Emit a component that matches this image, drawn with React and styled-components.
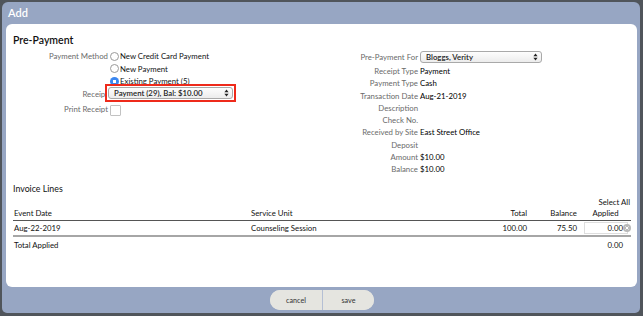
import styled, { createGlobalStyle } from "styled-components";

const GlobalStyle = createGlobalStyle`
  html, body {
    margin: 0;
    padding: 0;
    background: #50555b;
    font-family: Lato, "Open Sans", sans-serif;
    font-size: 7.8px;
  }
`;

const invoiceLines = [
  { date: "Aug-22-2019", unit: "Counseling Session", total: "100.00", balance: "75.50", applied: "0.00" },
];

const details = [
  ["Receipt Type", "Payment"],
  ["Payment Type", "Cash"],
  ["Transaction Date", "Aug-21-2019"],
  ["Description", ""],
  ["Check No.", ""],
  ["Received by Site", "East Street Office"],
  ["Deposit", ""],
  ["Amount", "$10.00"],
  ["Balance", "$10.00"],
];

function Arrows() {
  return (
    <svg width="5" height="8" viewBox="0 0 5 8">
      <path d="M2.5 0.5 L4.6 3.2 H0.4 Z" fill="#222" />
      <path d="M2.5 7.5 L4.6 4.8 H0.4 Z" fill="#222" />
    </svg>
  );
}

function Radio({ checked, label }) {
  return (
    <RadioRow>
      <RadioDot checked={checked} />
      <span>{label}</span>
    </RadioRow>
  );
}

export default function App() {
  return (
    <>
      <GlobalStyle />
      <Dialog>
        <TitleBar>Add</TitleBar>
        <Content>
          <Heading>Pre-Payment</Heading>
          <Forms>
            <LeftForm>
              <Label lh="12.5px">Payment Method</Label>
              <RadioGroup>
                <Radio label="New Credit Card Payment" />
                <Radio label="New Payment" />
                <Radio checked label="Existing Payment (5)" />
              </RadioGroup>
              <Label lh="12px">Receipt</Label>
              <Highlight>
                <FakeSelect width="125px">
                  <span>Payment (29), Bal: $10.00</span>
                  <Arrows />
                </FakeSelect>
              </Highlight>
              <Label lh="14px">Print Receipt</Label>
              <CheckCell>
                <Checkbox />
              </CheckCell>
            </LeftForm>
            <RightForm>
              <Label lh="14px" first>Pre-Payment For</Label>
              <SelectCell>
                <FakeSelect width="122px">
                  <span>Bloggs, Verity</span>
                  <Arrows />
                </FakeSelect>
              </SelectCell>
              {details.map(([label, value]) => (
                <DetailPair key={label}>
                  <Label>{label}</Label>
                  <Value>{value}</Value>
                </DetailPair>
              ))}
            </RightForm>
          </Forms>
          <SubHeading>Invoice Lines</SubHeading>
          <Table>
            <colgroup>
              <col style={{ width: 237 }} />
              <col style={{ width: 230 }} />
              <col style={{ width: 50 }} />
              <col style={{ width: 50 }} />
              <col style={{ width: 51 }} />
            </colgroup>
            <thead>
              <tr>
                <Th>Event Date</Th>
                <Th>Service Unit</Th>
                <Th right>Total</Th>
                <Th right>Balance</Th>
                <Th center>
                  <SelectAll>Select All</SelectAll>
                  Applied
                </Th>
              </tr>
            </thead>
            <tbody>
              {invoiceLines.map((line) => (
                <tr key={line.date}>
                  <Td>{line.date}</Td>
                  <Td>{line.unit}</Td>
                  <Td right>{line.total}</Td>
                  <Td right>{line.balance}</Td>
                  <Td>
                    <AppliedBox>
                      {line.applied}
                      <ClearIcon width="8" height="8" viewBox="0 0 8 8">
                        <circle cx="4" cy="4" r="4" fill="#b9b9b9" />
                        <path d="M2.5 2.5 L5.5 5.5 M5.5 2.5 L2.5 5.5" stroke="#fff" strokeWidth="1" />
                      </ClearIcon>
                    </AppliedBox>
                  </Td>
                </tr>
              ))}
            </tbody>
            <tfoot>
              <tr>
                <Tf colSpan={4}>Total Applied</Tf>
                <Tf right>0.00</Tf>
              </tr>
            </tfoot>
          </Table>
        </Content>
        <Footer>
          <ButtonGroup>
            <Button>cancel</Button>
            <Button>save</Button>
          </ButtonGroup>
        </Footer>
      </Dialog>
    </>
  );
}

const Dialog = styled.div`
  margin: 2px 3px 0 2px;
  height: 311px;
  background: #97a6c3;
  border-radius: 6px 6px 5px 5px;
  display: flex;
  flex-direction: column;
`;

const TitleBar = styled.div`
  height: 22px;
  line-height: 21px;
  padding-left: 6px;
  color: #fff;
  font-size: 11px;
  font-weight: 600;
`;

const Content = styled.div`
  margin: 0 3px 0 4px;
  height: 263px;
  background: #fff;
  border-radius: 6px;
  padding: 9px 7px 0 7px;
  box-sizing: border-box;
  color: #111;
`;

const Heading = styled.div`
  font-size: 10.5px;
  font-weight: 600;
  line-height: 14px;
  color: #111;
`;

const Forms = styled.div`
  display: flex;
  margin-top: 3px;
`;

const LeftForm = styled.div`
  display: grid;
  grid-template-columns: 95px auto;
  column-gap: 2px;
  width: 306px;
  align-content: start;
`;

const RightForm = styled.div`
  display: grid;
  grid-template-columns: 99px auto;
  column-gap: 2px;
  align-content: start;
`;

const DetailPair = styled.div`
  display: contents;
`;

const Label = styled.div`
  color: #6a6a6a;
  text-align: right;
  line-height: ${(p) => p.lh || "12.3px"};
  white-space: nowrap;
  ${(p) => p.first && "padding-bottom: 1px;"}
`;

const Value = styled.div`
  color: #000;
  line-height: 12.3px;
`;

const RadioGroup = styled.div`
  display: flex;
  flex-direction: column;
`;

const RadioRow = styled.div`
  display: flex;
  align-items: center;
  gap: 1px;
  height: 12.5px;
  color: #111;
`;

const RadioDot = styled.span`
  width: 9px;
  height: 9px;
  box-sizing: border-box;
  border-radius: 50%;
  border: ${(p) => (p.checked ? "none" : "1px solid #9a9a9a")};
  background: ${(p) => (p.checked ? "radial-gradient(circle, #fff 0 1.6px, #3b87f0 2px)" : "#fff")};
`;

const Highlight = styled.div`
  position: relative;
  margin: -4px 0 0 -5px;
  width: 125px;
  height: 12px;
  padding: 1px;
  border: 2px solid #ee2a1b;
  background: #fff;
`;

const FakeSelect = styled.div`
  width: ${(p) => p.width};
  height: 12px;
  box-sizing: border-box;
  border: 1px solid #a9a9a9;
  border-radius: 3px;
  background: linear-gradient(#fdfdfd, #ececec);
  display: flex;
  align-items: center;
  justify-content: space-between;
  padding: 0 3px 0 5px;
  font-weight: 600;
  color: #222;
  line-height: 10px;
`;

const SelectCell = styled.div`
  padding-top: 0.5px;
`;

const CheckCell = styled.div`
  padding-top: 3.5px;
`;

const Checkbox = styled.div`
  width: 9px;
  height: 9px;
  border: 1px solid #c2c2c2;
  border-radius: 1px;
  background: #fff;
`;

const SubHeading = styled.div`
  margin-top: 7px;
  font-size: 8.8px;
  line-height: 12px;
`;

const Table = styled.table`
  margin-top: 2px;
  width: 618px;
  border-collapse: collapse;
  table-layout: fixed;
`;

const Th = styled.th`
  font-weight: normal;
  text-align: ${(p) => (p.right ? "right" : p.center ? "center" : "left")};
  vertical-align: bottom;
  padding: 0 ${(p) => (p.right ? "3px" : "1px")} 1px 1px;
  line-height: 11px;
  border-bottom: 1px solid #555;
`;

const SelectAll = styled.div`
  text-align: right;
`;

const Td = styled.td`
  text-align: ${(p) => (p.right ? "right" : "left")};
  padding: 1px ${(p) => (p.right ? "3px" : "1px")} 1px 1px;
  line-height: 12px;
  height: 12px;
  border-bottom: 2px solid #a6a6a6;
`;

const Tf = styled.td`
  text-align: ${(p) => (p.right ? "right" : "left")};
  padding: 2px ${(p) => (p.right ? "8px" : "1px")} 0 1px;
  line-height: 12px;
`;

const AppliedBox = styled.div`
  position: relative;
  margin-left: 3px;
  width: 44px;
  height: 12px;
  box-sizing: border-box;
  border: 1px solid #dedede;
  text-align: right;
  padding-right: 4px;
  line-height: 10px;
`;

const ClearIcon = styled.svg`
  position: absolute;
  right: -4px;
  top: 1px;
`;

const Footer = styled.div`
  flex: 1;
  display: flex;
  align-items: center;
  justify-content: center;
  padding-left: 2px;
`;

const ButtonGroup = styled.div`
  display: flex;
  height: 20px;
  border-radius: 10px;
  overflow: hidden;
  background: #e5e5e0;
`;

const Button = styled.button`
  width: 52px;
  height: 20px;
  border: none;
  background: #e5e5e0;
  font-family: Lato, "Open Sans", sans-serif;
  font-size: 7.2px;
  color: #333;
  padding: 0;
  & + & {
    border-left: 1px solid #b4bfd4;
  }
`;
